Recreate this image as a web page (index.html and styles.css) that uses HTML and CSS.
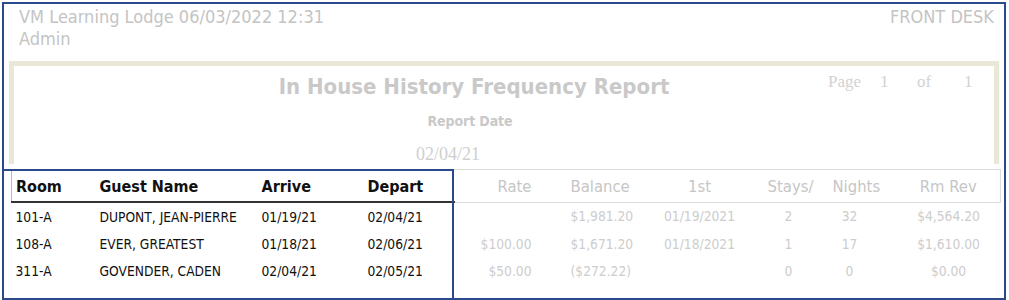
FILE: index.html
```html
<!DOCTYPE html>
<html>
<head>
<meta charset="utf-8">
<link rel="stylesheet" href="styles.css">
</head>
<body>
<div class="page">
  <div class="top">
    <div class="top-left">
      <div>VM Learning Lodge 06/03/2022 12:31</div>
      <div>Admin</div>
    </div>
    <div class="top-right">FRONT DESK</div>
  </div>
  <div class="frame">
    <div class="titles">
      <div class="title">In House History Frequency Report</div>
      <div class="subtitle">Report Date</div>
      <div class="date">02/04/21</div>
    </div>
    <div class="pager"><span>Page</span><span>1</span><span>of</span><span>1</span></div>
  </div>
  <table class="report">
    <colgroup>
      <col class="c-room"><col class="c-guest"><col class="c-arrive"><col class="c-depart">
      <col class="c-rate"><col class="c-bal"><col class="c-first"><col class="c-stays"><col class="c-nights"><col class="c-rev">
    </colgroup>
    <thead>
      <tr>
        <th class="dark">Room</th><th class="dark">Guest Name</th><th class="dark">Arrive</th><th class="dark">Depart</th>
        <th class="light r">Rate</th><th class="light bal">Balance</th><th class="light c">1st</th><th class="light c stays">Stays/</th><th class="light c">Nights</th><th class="light rev">Rm Rev</th>
      </tr>
    </thead>
    <tbody>
      <tr>
        <td>101-A</td><td>DUPONT, JEAN-PIERRE</td><td>01/19/21</td><td>02/04/21</td>
        <td class="g r"></td><td class="g bal">$1,981.20</td><td class="g c">01/19/2021</td><td class="g c">2</td><td class="g c">32</td><td class="g rev">$4,564.20</td>
      </tr>
      <tr>
        <td>108-A</td><td>EVER, GREATEST</td><td>01/18/21</td><td>02/06/21</td>
        <td class="g r">$100.00</td><td class="g bal">$1,671.20</td><td class="g c">01/18/2021</td><td class="g c">1</td><td class="g c">17</td><td class="g rev">$1,610.00</td>
      </tr>
      <tr>
        <td>311-A</td><td>GOVENDER, CADEN</td><td>02/04/21</td><td>02/05/21</td>
        <td class="g r">$50.00</td><td class="g bal">($272.22)</td><td class="g c"></td><td class="g c">0</td><td class="g c">0</td><td class="g rev">$0.00</td>
      </tr>
    </tbody>
  </table>
  <div class="selection"></div>
</div>
</body>
</html>
```

FILE: styles.css
```css
html, body {
  margin: 0;
  padding: 0;
  background: #ffffff;
}
body {
  font-family: "DejaVu Sans Condensed", "DejaVu Sans", sans-serif;
}
.page {
  position: relative;
  margin: 2px 0 0 2px;
  width: 1000px;
  height: 294px;
  border: 2px solid #2b4a8c;
  overflow: hidden;
}
.top {
  display: flex;
  justify-content: space-between;
  padding: 2px 10px 0 15px;
  color: #c4c4c4;
  font-size: 18px;
  line-height: 22px;
  height: 53px;
  box-sizing: border-box;
}
.frame {
  margin: 4px 0 0 5px;
  width: 990px;
  height: 103px;
  box-sizing: border-box;
  border: 5px solid #e9e7d6;
  border-bottom: none;
  display: flex;
  position: relative;
}
.titles {
  margin-left: 260px;
  width: 400px;
  text-align: center;
  display: flex;
  flex-direction: column;
  align-items: center;
  white-space: nowrap;
}
.title {
  font-weight: bold;
  font-size: 22px;
  color: #c9c9c9;
  margin-top: 8px;
  line-height: 26px;
}
.subtitle {
  font-weight: bold;
  font-size: 14px;
  letter-spacing: -0.1px;
  color: #c9c9c9;
  margin-top: 12px;
  line-height: 19px;
  margin-right: 8px;
}
.date {
  font-family: "Liberation Serif", serif;
  font-size: 18px;
  line-height: 21px;
  color: #cfcfcf;
  margin-top: 13px;
  margin-right: 52px;
}
.pager {
  margin-left: 154px;
  margin-top: 6px;
  display: flex;
  font-family: "Liberation Serif", serif;
  font-size: 17px;
  color: #d2d2d2;
  height: 20px;
}
.pager span:nth-child(1) { width: 52px; }
.pager span:nth-child(2) { width: 37px; }
.pager span:nth-child(3) { width: 47px; }
.report {
  border-collapse: collapse;
  table-layout: fixed;
  margin: 5px 0 0 7px;
  width: 989px;
  font-size: 13.7px;
}
.c-room { width: 84px; }
.c-guest { width: 162px; }
.c-arrive { width: 106px; }
.c-depart { width: 91px; }
.c-rate { width: 86px; }
.c-bal { width: 110px; }
.c-first { width: 98px; }
.c-stays { width: 80px; }
.c-nights { width: 42px; }
.c-rev { width: 130px; }
th {
  font-size: 16px;
  font-weight: 600;
  height: 29px;
  padding: 2px 4px 0;
  text-align: left;
  white-space: nowrap;
  border-top: 1px solid #dcdcdc;
}
th.dark {
  color: #111;
  border-bottom: 2px solid #333;
}
th.dark:first-child { border-left: 1px solid #bbb; }
th.light {
  color: #c6c6c6;
  font-weight: normal;
  font-size: 16.5px;
  border-bottom: 1px solid #dcdcdc;
}
th.stays { padding-left: 8px; }
th.light:last-child { border-right: 1px solid #dcdcdc; }
td {
  height: 27px;
  padding: 0 4px;
  color: #111;
  white-space: nowrap;
}
td.g { color: #cdcdcd; }
.r { text-align: right; padding-right: 9px; }
.bal { padding-left: 30px; text-align: left; }
.c { text-align: center; }
.rev { text-align: center; padding-left: 30px; }
.selection {
  position: absolute;
  left: -2px;
  top: 165px;
  width: 448px;
  height: 130px;
  border: 2px solid #2b4a8c;
}
```
